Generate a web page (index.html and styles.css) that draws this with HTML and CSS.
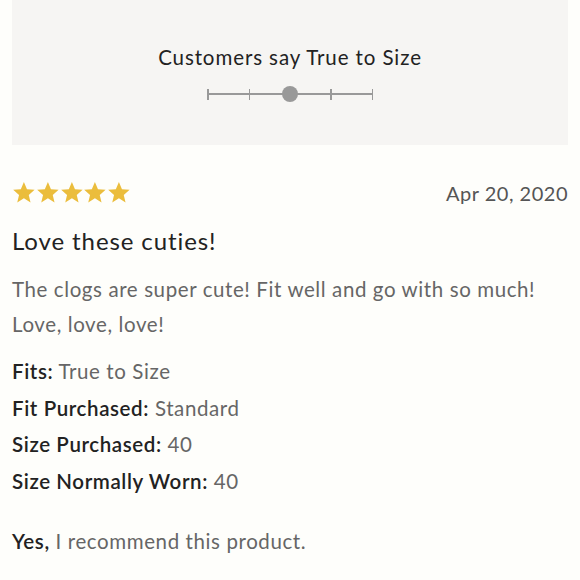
FILE: index.html
```html
<!DOCTYPE html>
<html>
<head>
<meta charset="utf-8">
<link rel="stylesheet" href="styles.css">
</head>
<body>
<div class="page">
  <section class="fit-box">
    <div class="fit-title">Customers say True to Size</div>
    <div class="scale">
      <span class="tick"></span>
      <span class="seg"></span>
      <span class="tick"></span>
      <span class="seg"></span>
      <span class="dot"></span>
      <span class="seg"></span>
      <span class="tick"></span>
      <span class="seg"></span>
      <span class="tick"></span>
    </div>
  </section>
  <article class="review">
    <div class="review-head">
      <div class="stars">
        <svg viewBox="0 0 24 24"><path d="M12 1.5l3.1 7.2 7.7.6-5.9 5.1 1.8 7.6L12 17.9 5.3 22l1.8-7.6-5.9-5.1 7.7-.6z"/></svg>
        <svg viewBox="0 0 24 24"><path d="M12 1.5l3.1 7.2 7.7.6-5.9 5.1 1.8 7.6L12 17.9 5.3 22l1.8-7.6-5.9-5.1 7.7-.6z"/></svg>
        <svg viewBox="0 0 24 24"><path d="M12 1.5l3.1 7.2 7.7.6-5.9 5.1 1.8 7.6L12 17.9 5.3 22l1.8-7.6-5.9-5.1 7.7-.6z"/></svg>
        <svg viewBox="0 0 24 24"><path d="M12 1.5l3.1 7.2 7.7.6-5.9 5.1 1.8 7.6L12 17.9 5.3 22l1.8-7.6-5.9-5.1 7.7-.6z"/></svg>
        <svg viewBox="0 0 24 24"><path d="M12 1.5l3.1 7.2 7.7.6-5.9 5.1 1.8 7.6L12 17.9 5.3 22l1.8-7.6-5.9-5.1 7.7-.6z"/></svg>
      </div>
      <div class="date">Apr 20, 2020</div>
    </div>
    <h2 class="review-title">Love these cuties!</h2>
    <p class="review-body">The clogs are super cute! Fit well and go with so much!<br>Love, love, love!</p>
    <ul class="details">
      <li><b>Fits:</b> True to Size</li>
      <li><b>Fit Purchased:</b> Standard</li>
      <li><b>Size Purchased:</b> 40</li>
      <li><b>Size Normally Worn:</b> 40</li>
    </ul>
    <p class="recommend"><b>Yes,</b> I recommend this product.</p>
  </article>
</div>
</body>
</html>
```

FILE: styles.css
```css
html, body {
  margin: 0;
  padding: 0;
  background: #fefefb;
}
body {
  font-family: "Lato", "Open Sans", sans-serif;
  color: #666;
}
.page {
  width: 556px;
  margin: 0 0 0 12px;
}
.fit-box {
  background: #f6f5f3;
  height: 145px;
  display: flex;
  flex-direction: column;
  align-items: center;
  box-sizing: border-box;
  padding-top: 44px;
}
.fit-title {
  font-size: 20.5px;
  letter-spacing: 0.9px;
  color: #222;
  line-height: 26px;
}
.scale {
  display: flex;
  align-items: center;
  margin-top: 16px;
}
.tick {
  width: 1.5px;
  height: 11px;
  background: #999;
}
.seg {
  width: 40px;
  height: 1.5px;
  background: #999;
}
.dot {
  width: 16px;
  height: 16px;
  border-radius: 50%;
  background: #999;
  margin: 0 -8px;
  position: relative;
}
.review {
  padding-top: 35px;
}
.review-head {
  display: flex;
  justify-content: space-between;
  align-items: center;
  height: 25px;
}
.stars {
  display: flex;
}
.stars svg {
  width: 23.8px;
  height: 25px;
  fill: #ebbd3c;
}
.date {
  font-size: 20px;
  color: #555;
  letter-spacing: 0.5px;
}
.review-title {
  margin: 22px 0 0;
  font-size: 24px;
  font-weight: 400;
  color: #222;
  letter-spacing: 0.9px;
  line-height: 28px;
}
.review-body {
  margin: 17px 0 0;
  font-size: 20.5px;
  line-height: 35px;
  letter-spacing: 0.6px;
  color: #666;
}
.details {
  list-style: none;
  margin: 11px 0 0;
  padding: 0;
}
.details li {
  font-size: 20.5px;
  line-height: 36.7px;
  letter-spacing: 0.6px;
  color: #666;
}
.details b, .recommend b {
  font-weight: 600;
  color: #222;
}
.recommend {
  margin: 26px 0 0;
  font-size: 20.5px;
  line-height: 30px;
  letter-spacing: 0.6px;
  color: #666;
}
```
